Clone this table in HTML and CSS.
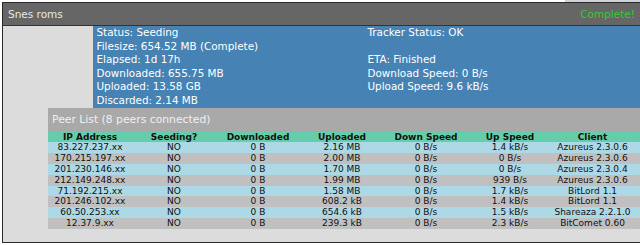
FILE: index.html
```html
<!DOCTYPE html>
<html lang="en">
<head>
<meta charset="utf-8">
<title>Snes roms</title>
<link rel="stylesheet" href="styles.css">
</head>
<body>
<div class="torrent">
  <div class="bar">
    <span class="name">Snes roms</span>
    <span class="state">Complete!</span>
  </div>
  <div class="content">
    <div class="stats">
      <div class="col">
        <div>Status: Seeding</div>
        <div>Filesize: 654.52 MB (Complete)</div>
        <div>Elapsed: 1d 17h</div>
        <div>Downloaded: 655.75 MB</div>
        <div>Uploaded: 13.58 GB</div>
        <div>Discarded: 2.14 MB</div>
      </div>
      <div class="col">
        <div>Tracker Status: OK</div>
        <div>&nbsp;</div>
        <div>ETA: Finished</div>
        <div>Download Speed: 0 B/s</div>
        <div>Upload Speed: 9.6 kB/s</div>
        <div>&nbsp;</div>
      </div>
    </div>
    <div class="peers">
      <div class="peers-title">Peer List (8 peers connected)</div>
      <table class="peer-table">
        <thead>
          <tr><th>IP Address</th><th>Seeding?</th><th>Downloaded</th><th>Uploaded</th><th>Down Speed</th><th>Up Speed</th><th>Client</th></tr>
        </thead>
        <tbody>
          <tr><td>83.227.237.xx</td><td>NO</td><td>0 B</td><td>2.16 MB</td><td>0 B/s</td><td>1.4 kB/s</td><td>Azureus 2.3.0.6</td></tr>
          <tr><td>170.215.197.xx</td><td>NO</td><td>0 B</td><td>2.00 MB</td><td>0 B/s</td><td>0 B/s</td><td>Azureus 2.3.0.6</td></tr>
          <tr><td>201.230.146.xx</td><td>NO</td><td>0 B</td><td>1.70 MB</td><td>0 B/s</td><td>0 B/s</td><td>Azureus 2.3.0.4</td></tr>
          <tr><td>212.149.248.xx</td><td>NO</td><td>0 B</td><td>1.99 MB</td><td>0 B/s</td><td>939 B/s</td><td>Azureus 2.3.0.6</td></tr>
          <tr><td>71.192.215.xx</td><td>NO</td><td>0 B</td><td>1.58 MB</td><td>0 B/s</td><td>1.7 kB/s</td><td>BitLord 1.1</td></tr>
          <tr><td>201.246.102.xx</td><td>NO</td><td>0 B</td><td>608.2 kB</td><td>0 B/s</td><td>1.4 kB/s</td><td>BitLord 1.1</td></tr>
          <tr><td>60.50.253.xx</td><td>NO</td><td>0 B</td><td>654.6 kB</td><td>0 B/s</td><td>1.5 kB/s</td><td>Shareaza 2.2.1.0</td></tr>
          <tr><td>12.37.9.xx</td><td>NO</td><td>0 B</td><td>239.3 kB</td><td>0 B/s</td><td>2.3 kB/s</td><td>BitComet 0.60</td></tr>
        </tbody>
      </table>
    </div>
  </div>
</div>
</body>
</html>
```
FILE: styles.css
```css
html, body {
  margin: 0;
  padding: 0;
}

body {
  width: 640px;
  height: 245px;
  overflow: hidden;
  background: #fff linear-gradient(to right, #fff 565px, #d2d3d8 565px) no-repeat;
  background-size: 100% 2px;
  font-family: "DejaVu Sans", Verdana, sans-serif;
}

.torrent {
  margin: 2px 0 0 2px;
  border: 1px solid #2a2a2a;
  border-right: none;
  background: #dcdcdc;
}

/* title bar */
.bar {
  height: 22px;
  display: flex;
  align-items: center;
  justify-content: space-between;
  padding: 0 5px 0 5px;
  background: #666;
  border-bottom: 1px solid #333;
  font-size: 10.5px;
}

.name {
  color: #e8e8e8;
}

.state {
  color: #33cc33;
}

.content {
  padding-bottom: 13px;
}

/* torrent summary */
.stats {
  margin-left: 90px;
  background: #4682b4;
  color: #fff;
  font-size: 10.4px;
  line-height: 13.5px;
  padding: 0 0 1px 3.5px;
  display: grid;
  grid-template-columns: 271px 1fr;
}

/* peer list */
.peers {
  margin-left: 45px;
}

.peers-title {
  height: 23.5px;
  padding-left: 4px;
  display: flex;
  align-items: center;
  background: #a9a9a9;
  color: #f0f0f0;
  font-size: 10.8px;
}

.peer-table {
  width: 100%;
  border-collapse: collapse;
  table-layout: fixed;
  font-size: 9px;
  color: #111;
}

.peer-table th,
.peer-table td {
  padding: 0;
  text-align: center;
  white-space: nowrap;
  width: 84px;
}

.peer-table th:last-child,
.peer-table td:last-child {
  width: auto;
  padding-right: 7px;
}

.peer-table th {
  background: #66cdaa;
  font-weight: bold;
  height: 10.6px;
  line-height: 10.6px;
}

.peer-table td {
  height: 10.875px;
  line-height: 10.875px;
}

.peer-table tbody tr:nth-child(odd) {
  background: #add8e6;
}

.peer-table tbody tr:nth-child(even) {
  background: #c0c0c0;
}
```
